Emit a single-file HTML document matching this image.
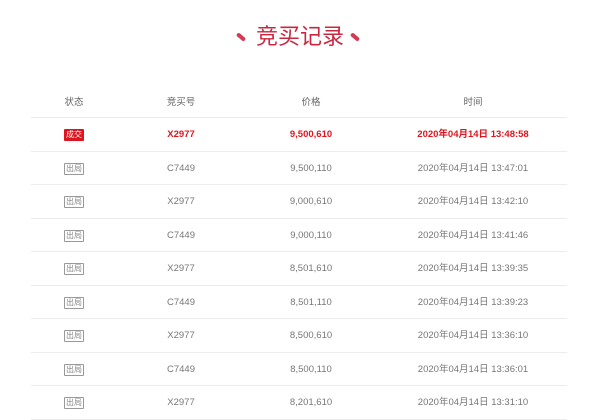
<!DOCTYPE html>
<html><head><meta charset="utf-8"><style>
body{margin:0;width:600px;height:414px;overflow:hidden;background:#fff;font-family:"Liberation Sans","Noto Sans CJK SC",sans-serif;}
.title{position:absolute;top:20px;left:0;width:600px;text-align:center;font-size:22px;color:#c8283f;line-height:34px;}
.dash{position:absolute;width:10px;height:4px;background:#d23a55;border-radius:2px;transform:rotate(40deg);top:35px;}
.tbl{position:absolute;left:31px;top:86px;width:536px;}
.row{height:32.5px;border-bottom:1px solid #ececec;position:relative;font-size:9.5px;color:#777;}
.row span{position:absolute;top:0;line-height:33px;transform:translateX(-50%);white-space:nowrap;}
.row.hd{height:31px;}
.row.hd span{line-height:33px;}
.c1{left:43px}.c2{left:150px}.c3{left:280px}.c4{left:442px}
.hd{color:#666;font-size:9.5px;}
.red{color:#e0141e;font-weight:bold;}
i{font-style:normal;}
.tag{display:inline-block;font-size:8px;line-height:10px;padding:0 1px;border:1px solid #999;color:#888;border-radius:1px;}
.tag.r{background:#e0141e;border-color:#e0141e;color:#fff;font-weight:normal;}
</style></head><body>
<div class="dash" style="left:236px"></div>
<div class="title">竞买记录</div>
<div class="dash" style="left:350px"></div>
<div class="tbl">
<div class="row hd"><span class="c1">状态</span><span class="c2">竞买号</span><span class="c3">价格</span><span class="c4">时间</span></div>
<div class="row red"><span class="c1"><i class="tag r">成交</i></span><span class="c2">X2977</span><span class="c3">9,500,610</span><span class="c4">2020年04月14日 13:48:58</span></div>
<div class="row"><span class="c1"><i class="tag">出局</i></span><span class="c2">C7449</span><span class="c3">9,500,110</span><span class="c4">2020年04月14日 13:47:01</span></div>
<div class="row"><span class="c1"><i class="tag">出局</i></span><span class="c2">X2977</span><span class="c3">9,000,610</span><span class="c4">2020年04月14日 13:42:10</span></div>
<div class="row"><span class="c1"><i class="tag">出局</i></span><span class="c2">C7449</span><span class="c3">9,000,110</span><span class="c4">2020年04月14日 13:41:46</span></div>
<div class="row"><span class="c1"><i class="tag">出局</i></span><span class="c2">X2977</span><span class="c3">8,501,610</span><span class="c4">2020年04月14日 13:39:35</span></div>
<div class="row"><span class="c1"><i class="tag">出局</i></span><span class="c2">C7449</span><span class="c3">8,501,110</span><span class="c4">2020年04月14日 13:39:23</span></div>
<div class="row"><span class="c1"><i class="tag">出局</i></span><span class="c2">X2977</span><span class="c3">8,500,610</span><span class="c4">2020年04月14日 13:36:10</span></div>
<div class="row"><span class="c1"><i class="tag">出局</i></span><span class="c2">C7449</span><span class="c3">8,500,110</span><span class="c4">2020年04月14日 13:36:01</span></div>
<div class="row"><span class="c1"><i class="tag">出局</i></span><span class="c2">X2977</span><span class="c3">8,201,610</span><span class="c4">2020年04月14日 13:31:10</span></div>
</div>
</body></html>
